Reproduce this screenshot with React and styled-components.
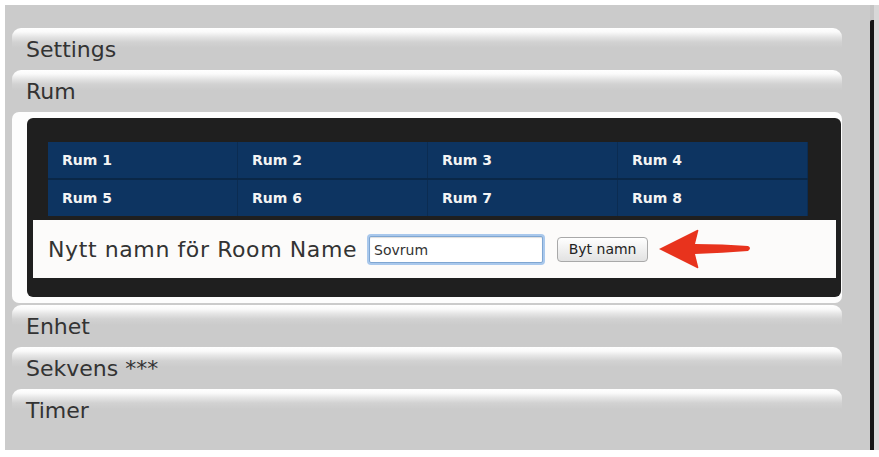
import React from "react";
import styled, { createGlobalStyle } from "styled-components";

const Global = createGlobalStyle`
  html, body { margin: 0; padding: 0; background: #ffffff; }
  body { font-family: "DejaVu Sans", Verdana, sans-serif; }
  * { box-sizing: border-box; }
`;

const Frame = styled.div`
  margin: 5px 0 0 5px;
  width: 874px;
  height: 445px;
  background: #cbcbcb;
  display: flex;
`;

const Main = styled.div`
  flex: 1;
  padding: 23px 0 0 7px;
  display: flex;
  flex-direction: column;
`;

const Rail = styled.div`
  width: 9px;
  display: flex;
  padding-top: 15px;
  background: linear-gradient(to right, #c4c4c4 0, #c4c4c4 4px, #d8d8d8 4px);
`;

const RailLine = styled.div`
  width: 4px;
  background: #151515;
  border-radius: 2px 0 0 0;
`;

const Accordion = styled.div`
  width: 830px;
  display: flex;
  flex-direction: column;
  gap: 2px;
`;

const Header = styled.div`
  height: 40px;
  padding: 9px 0 0 14px;
  border-radius: 9px 9px 0 0;
  background: linear-gradient(
    to bottom,
    #ffffff 0px,
    #fafafa 4px,
    #e4e4e4 9px,
    #d2d2d2 14px,
    #cbcbcb 20px,
    #cbcbcb 100%
  );
  color: #333;
  font-size: 22px;
  line-height: 26px;
`;

const Panel = styled.div`
  background: #fdfdfd;
  border-radius: 7px;
  padding: 6px 1px 6px 15px;
`;

const DarkBox = styled.div`
  background: #1f1f1f;
  border-radius: 6px;
  padding: 24px 0 19px 0;
  display: flex;
  flex-direction: column;
`;

const RoomGrid = styled.div`
  margin: 0 33px 0 21px;
  display: grid;
  grid-template-columns: repeat(4, 190px);
  grid-auto-rows: 36px;
  row-gap: 2px;
  background: #0a2747;
`;

const RoomCell = styled.div`
  background: #0d3461;
  color: #f4f4f4;
  font-weight: bold;
  font-size: 14px;
  display: flex;
  align-items: center;
  padding-left: 14px;
  box-shadow: inset -1px 0 0 #0b2c52;
`;

const Form = styled.div`
  margin: 4px 5px 0 6px;
  height: 58px;
  background: #fcfbfa;
  display: flex;
  align-items: center;
  padding-left: 15px;
`;

const Label = styled.span`
  font-size: 22px;
  letter-spacing: 0.6px;
  color: #333;
`;

const NameInput = styled.input`
  margin-left: 12px;
  width: 174px;
  height: 27px;
  border: 1px solid #7fa6d2;
  border-radius: 2px;
  box-shadow: 0 0 0 2px #a9c8ec, inset 0 1px 1px #ddd;
  padding: 2px 4px 0;
  font-family: "DejaVu Sans", Verdana, sans-serif;
  font-size: 14px;
  color: #333;
  background: #fff;
  outline: none;
`;

const Button = styled.button`
  margin-left: 14px;
  width: 91px;
  height: 25px;
  border: 1px solid #a9a9a9;
  border-radius: 4px;
  background: linear-gradient(to bottom, #ffffff, #f0f0f0 50%, #e2e2e2);
  font-family: "DejaVu Sans", Verdana, sans-serif;
  font-size: 14px;
  color: #222;
  padding: 0;
`;

const Arrow = styled.svg`
  margin-left: 9px;
  width: 96px;
  height: 40px;
  display: block;
`;

const rooms = ["Rum 1", "Rum 2", "Rum 3", "Rum 4", "Rum 5", "Rum 6", "Rum 7", "Rum 8"];

export default function App() {
  return (
    <>
      <Global />
      <Frame>
        <Main>
          <Accordion>
            <Header>Settings</Header>
            <Header>Rum</Header>
            <Panel>
              <DarkBox>
                <RoomGrid>
                  {rooms.map((r) => (
                    <RoomCell key={r}>{r}</RoomCell>
                  ))}
                </RoomGrid>
                <Form>
                  <Label>Nytt namn för Room Name</Label>
                  <NameInput defaultValue="Sovrum" />
                  <Button>Byt namn</Button>
                  <Arrow viewBox="0 0 96 40">
                    <path
                      d="M2 20 L40 1 Q42 0 41 3 L38 15 Q66 15 91 17 Q95 19 91 22 Q66 24 38 25 L41 37 Q42 40 40 39 Z"
                      fill="#e8331d"
                    />
                  </Arrow>
                </Form>
              </DarkBox>
            </Panel>
            <Header>Enhet</Header>
            <Header>Sekvens ***</Header>
            <Header>Timer</Header>
          </Accordion>
        </Main>
        <Rail>
          <RailLine />
        </Rail>
      </Frame>
    </>
  );
}
